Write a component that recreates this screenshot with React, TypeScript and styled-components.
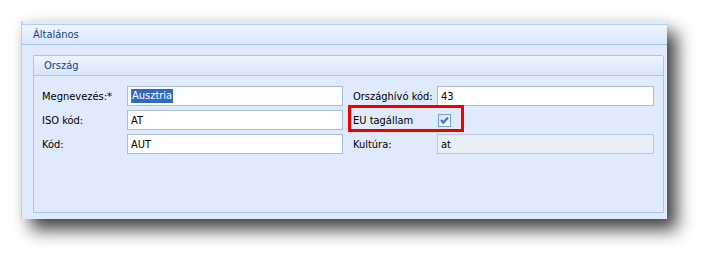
import React from "react";
import styled, { createGlobalStyle } from "styled-components";

const Global = createGlobalStyle`
  html, body { margin: 0; padding: 0; background: #ffffff; }
  body { font-family: Tahoma, "DejaVu Sans Condensed", "DejaVu Sans", sans-serif; font-size: 11px; color: #000; }
`;

const Page = styled.div`
  width: 709px;
  height: 261px;
  padding: 21px 0 0 21px;
  box-sizing: border-box;
`;

const Panel = styled.div`
  width: 646px;
  height: 198px;
  box-sizing: border-box;
  background: #dfebfd;
  border-left: 1px solid #b5cff3;
  padding-top: 3px;
  display: flex;
  flex-direction: column;
  box-shadow: 10px 11px 16px rgba(0, 0, 0, 0.72), 0 0 10px rgba(0, 0, 0, 0.08);
`;

const PanelHeader = styled.div`
  height: 19px;
  border-top: 1px solid #b3cdf1;
  border-bottom: 1px solid #a7c4eb;
  background: linear-gradient(#eef5fe, #d9e7fb);
  color: #15428b;
  display: flex;
  align-items: center;
  padding-left: 11px;
`;

const PanelBody = styled.div`
  flex: 1;
  padding: 10px 3px 6px 11px;
  display: flex;
`;

const FieldSet = styled.div`
  flex: 1;
  border: 1px solid #a9c6ed;
  border-radius: 0 3px 0 0;
  display: flex;
  flex-direction: column;
`;

const FieldSetHeader = styled.div`
  height: 19px;
  border-bottom: 1px solid #a9c6ed;
  background: linear-gradient(#edf4fe, #d8e6fb);
  color: #15428b;
  display: flex;
  align-items: center;
  padding-left: 10px;
`;

const FormGrid = styled.div`
  display: grid;
  grid-template-columns: 301px 301px;
  column-gap: 10px;
  row-gap: 4px;
  padding: 10px 0 0 8px;
`;

const Field = styled.div<{ $labelWidth: number }>`
  position: relative;
  display: grid;
  grid-template-columns: ${(p) => p.$labelWidth}px 1fr;
  height: 20px;
  align-items: center;
`;

const Label = styled.span`
  white-space: nowrap;
`;

const Input = styled.div<{ $readOnly?: boolean }>`
  height: 20px;
  box-sizing: border-box;
  border: 1px solid ${(p) => (p.$readOnly ? "#b9c9dc" : "#a8bdd7")};
  background: ${(p) => (p.$readOnly ? "#e9eff7" : "#ffffff")};
  display: flex;
  align-items: center;
  padding-left: 3px;
`;

const Selected = styled.span`
  background: #3169c6;
  color: #ffffff;
  border-left: 1px solid #c65a1a;
  padding: 0 1px 0 0;
  line-height: 14px;
`;

const CheckCell = styled.div`
  display: flex;
  align-items: center;
  height: 20px;
`;

const Annotation = styled.div`
  position: absolute;
  left: -5px;
  top: -5px;
  width: 116px;
  height: 27px;
  box-sizing: border-box;
  border: 3px solid #f20000;
  pointer-events: none;
`;

const CheckBox = () => (
  <svg width="13" height="13" viewBox="0 0 13 13" style={{ marginLeft: 1 }}>
    <defs>
      <linearGradient id="cbg" x1="0" y1="0" x2="1" y2="1">
        <stop offset="0" stopColor="#d6e2f3" />
        <stop offset="1" stopColor="#ffffff" />
      </linearGradient>
    </defs>
    <rect x="0.5" y="0.5" width="12" height="12" fill="url(#cbg)" stroke="#7a9fd6" />
    <path d="M3 6 L5.3 8.6 L10 3.4" fill="none" stroke="#3a78d4" strokeWidth="2.2" />
  </svg>
);

export default function App() {
  return (
    <>
      <Global />
      <Page>
        <Panel>
          <PanelHeader>Általános</PanelHeader>
          <PanelBody>
            <FieldSet>
              <FieldSetHeader>Ország</FieldSetHeader>
              <FormGrid>
                <Field $labelWidth={85}>
                  <Label>Megnevezés:*</Label>
                  <Input>
                    <Selected>Ausztria</Selected>
                  </Input>
                </Field>
                <Field $labelWidth={84}>
                  <Label>Országhívó kód:</Label>
                  <Input>43</Input>
                </Field>
                <Field $labelWidth={85}>
                  <Label>ISO kód:</Label>
                  <Input>AT</Input>
                </Field>
                <Field $labelWidth={84}>
                  <Label>EU tagállam</Label>
                  <CheckCell>
                    <CheckBox />
                  </CheckCell>
                  <Annotation />
                </Field>
                <Field $labelWidth={85}>
                  <Label>Kód:</Label>
                  <Input>AUT</Input>
                </Field>
                <Field $labelWidth={84}>
                  <Label>Kultúra:</Label>
                  <Input $readOnly>at</Input>
                </Field>
              </FormGrid>
            </FieldSet>
          </PanelBody>
        </Panel>
      </Page>
    </>
  );
}
